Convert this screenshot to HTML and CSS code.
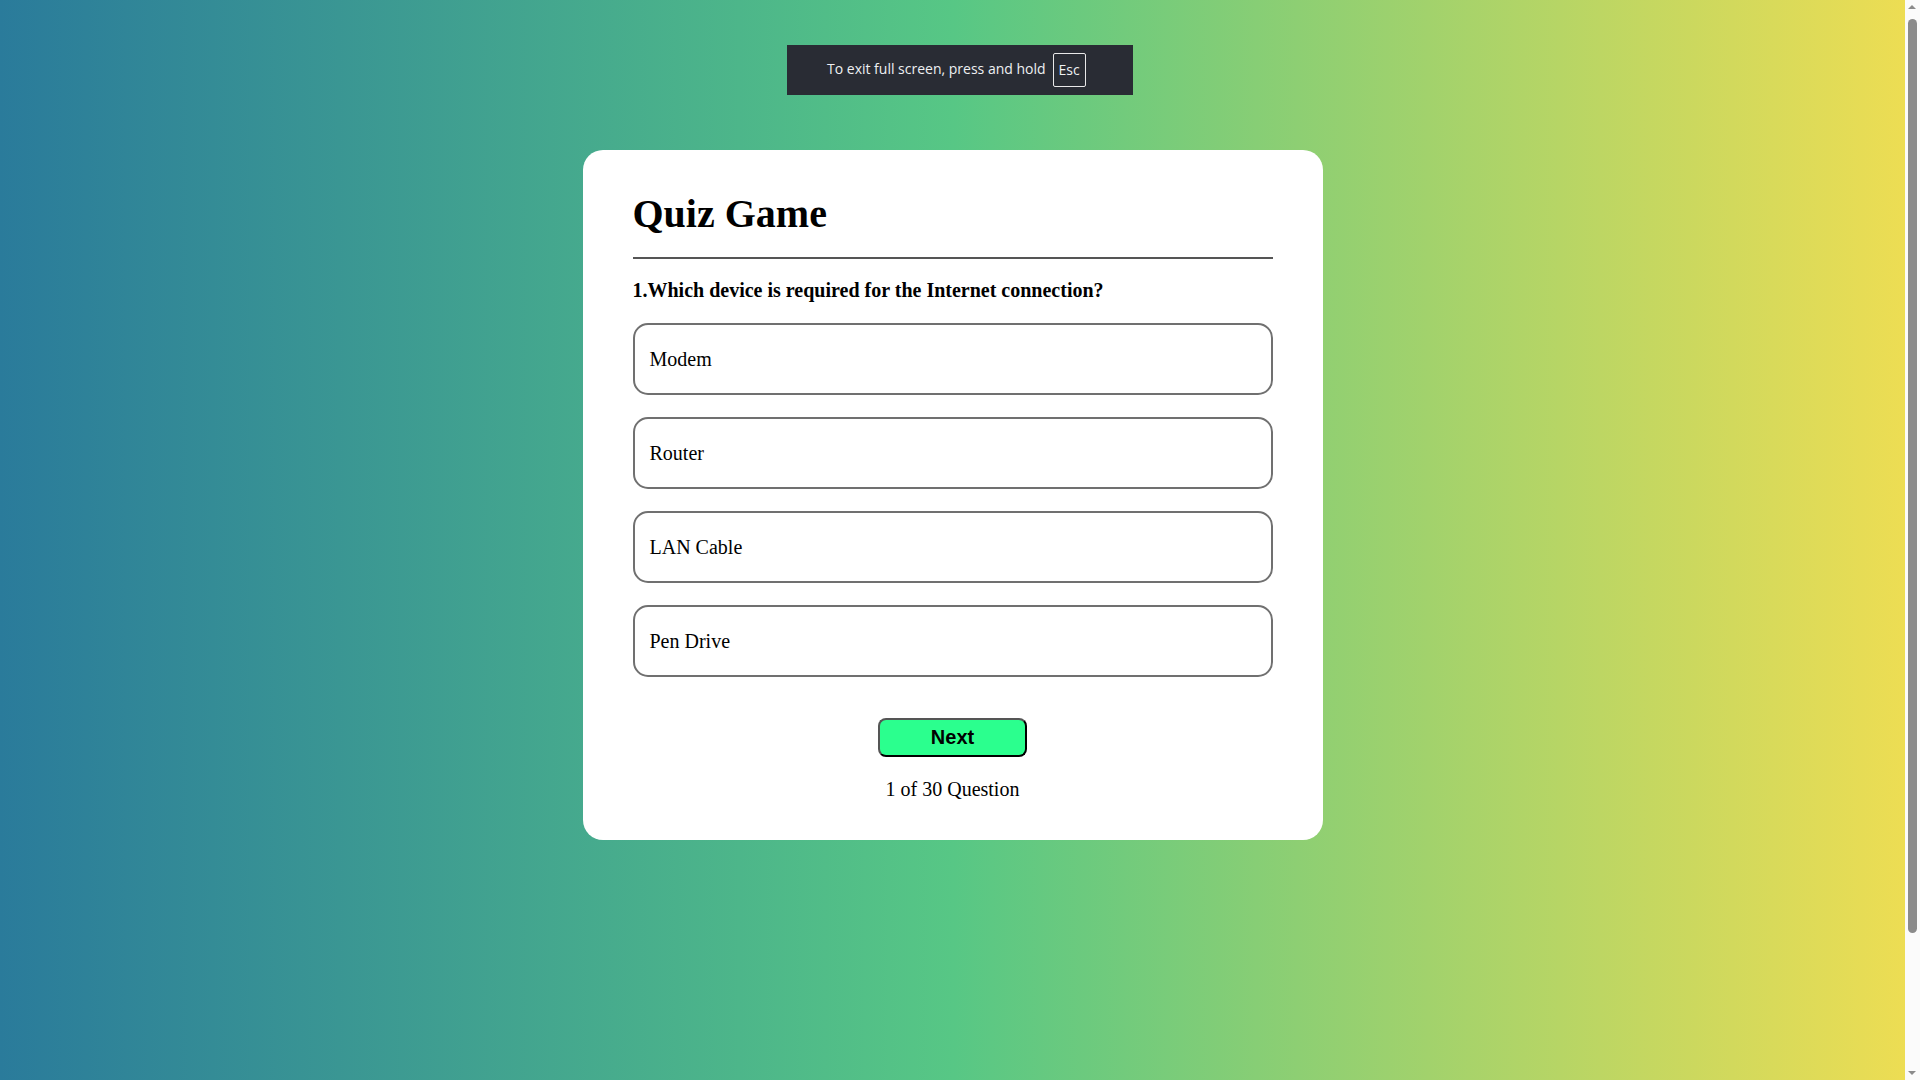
FILE: index.html
```html
<!DOCTYPE html>
<html lang="en">
<head>
<meta charset="utf-8">
<title>Quiz Game</title>
<link rel="stylesheet" href="styles.css">
</head>
<body>
<div class="page">
  <div class="card">
    <h1 class="title">Quiz Game</h1>
    <hr class="rule">
    <p class="question">1.Which device is required for the Internet connection?</p>
    <div class="options">
      <button class="option">Modem</button>
      <button class="option">Router</button>
      <button class="option">LAN Cable</button>
      <button class="option">Pen Drive</button>
    </div>
    <div class="footer">
      <button class="next">Next</button>
      <p class="count">1 of 30 Question</p>
    </div>
  </div>
</div>
<div class="fs-toast"><span class="fs-text">To exit full screen, press and hold</span><span class="key">Esc</span></div>
<div class="scrollbar">
  <div class="arrow arrow-up"></div>
  <div class="thumb"></div>
  <div class="arrow arrow-down"></div>
</div>
</body>
</html>
```
FILE: styles.css
```css
html, body {
  margin: 0;
  padding: 0;
  height: 100%;
  overflow: hidden;
}
body {
  font-family: "Liberation Serif", "Times New Roman", serif;
  background: #fbfbfb;
}
.page {
  width: calc(100% - 15px);
  height: 100%;
  box-sizing: border-box;
  padding-top: 150px;
  display: flex;
  flex-direction: column;
  align-items: center;
  background: linear-gradient(90deg, rgb(42,123,155) 0%, rgb(87,199,133) 50%, rgb(237,221,83) 100%);
}
.card {
  width: 740px;
  box-sizing: border-box;
  padding: 41px 50px 39px;
  background: #fff;
  border-radius: 20px;
}
.title {
  margin: 0;
  font-size: 40px;
  line-height: 46px;
  font-weight: bold;
  color: #000;
}
.rule {
  margin: 20px 0 0;
  border: none;
  height: 2px;
  background: #555;
}
.question {
  margin: 20px 0 0;
  font-size: 20px;
  line-height: 23px;
  font-weight: bold;
  color: #000;
}
.options {
  margin-top: 21px;
  display: flex;
  flex-direction: column;
  gap: 22px;
}
.option {
  height: 72px;
  box-sizing: border-box;
  border: 2px solid #707070;
  border-radius: 15px;
  background: #fff;
  padding: 0 15px;
  display: flex;
  align-items: center;
  font-family: "Liberation Serif", "Times New Roman", serif;
  font-size: 20px;
  color: #000;
  text-align: left;
}
.footer {
  margin-top: 41px;
  display: flex;
  flex-direction: column;
  align-items: center;
}
.next {
  width: 149px;
  height: 39px;
  box-sizing: border-box;
  background: #2bff8e;
  border: 2px solid #000;
  border-top-color: #555;
  border-left-color: #555;
  border-radius: 8px;
  font-family: "Liberation Sans", Arial, sans-serif;
  font-weight: bold;
  font-size: 20px;
  color: #000;
  padding: 0;
}
.count {
  margin: 21px 0 0;
  font-size: 20px;
  line-height: 23px;
  color: #000;
}
.fs-toast {
  position: fixed;
  top: 45px;
  left: 787px;
  width: 346px;
  height: 50px;
  box-sizing: border-box;
  background: #292c34;
  display: flex;
  align-items: center;
  padding-left: 40px;
  gap: 7px;
  font-family: "Open Sans", "Noto Sans", sans-serif;
  font-size: 14px;
  line-height: 18px;
  color: #eef0f2;
}
.fs-text {
  margin-top: -2px;
}
.key {
  width: 33px;
  height: 34px;
  box-sizing: border-box;
  border: 1px solid #e8e8e8;
  border-radius: 2px;
  display: flex;
  align-items: center;
  justify-content: center;
}
.scrollbar {
  position: fixed;
  top: 0;
  right: 0;
  width: 15px;
  height: 100%;
  background: #fbfbfb;
}
.thumb {
  position: absolute;
  left: 3px;
  top: 19px;
  width: 9px;
  height: 914px;
  border-radius: 5px;
  background: #8b8b8b;
}
.arrow {
  position: absolute;
  left: 3px;
  width: 0;
  height: 0;
  border-left: 4.5px solid transparent;
  border-right: 4.5px solid transparent;
}
.arrow-up {
  top: 5px;
  border-bottom: 4px solid #8b8b8b;
}
.arrow-down {
  bottom: 5px;
  border-top: 4px solid #8b8b8b;
}
```
